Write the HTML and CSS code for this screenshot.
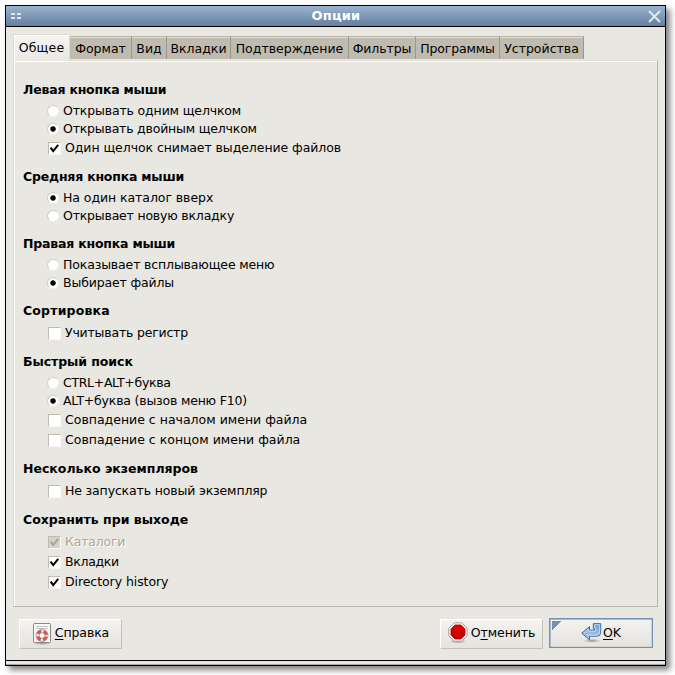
FILE: index.html
```html
<!DOCTYPE html>
<html lang="ru">
<head>
<meta charset="utf-8">
<title>Опции</title>
<link rel="stylesheet" href="styles.css">
</head>
<body>
<svg class="defs" width="0" height="0">
  <symbol id="tick" viewBox="0 0 11 11"><path d="M1.6 4.6 4.2 8.2 9.2 1.8" fill="none" stroke="currentColor" stroke-width="2"/></symbol>
  <linearGradient id="blue" x2="0" y2="1"><stop offset="0" stop-color="#6f9bcc"/><stop offset="1" stop-color="#b8d2ee"/></linearGradient>
  <linearGradient id="red" x2="0" y2="1"><stop offset="0" stop-color="#e60000"/><stop offset="1" stop-color="#c00000"/></linearGradient>
  <radialGradient id="shade"><stop offset="0" stop-color="#000" stop-opacity=".35"/><stop offset="1" stop-color="#000" stop-opacity="0"/></radialGradient>
</svg>
<div class="window">
  <header class="titlebar">
    <svg class="menu-mark" width="10" height="6"><path d="M0 1h4M6 1h4M0 5h4M6 5h4" stroke="#e2e8ef" stroke-width="2"/></svg>
    <h1>Опции</h1>
    <svg class="close" width="13" height="13"><path d="M1 1 12 12M12 1 1 12" stroke="#e2e8ef" stroke-width="2"/></svg>
  </header>
  <main>
    <nav class="tabs">
      <span class="tab active">Общее</span><span class="tab t-format">Формат</span><span class="tab t-view">Вид</span><span class="tab t-tabs">Вкладки</span><span class="tab t-confirm">Подтверждение</span><span class="tab t-filters">Фильтры</span><span class="tab t-programs">Программы</span><span class="tab t-devices">Устройства</span>
    </nav>
    <div class="page">
      <section><h2 class="tight-2">Левая кнопка мыши</h2>
        <label class="radio tight-1"><i></i>Открывать одним щелчком</label>
        <label class="radio on tight-2"><i></i>Открывать двойным щелчком</label>
        <label class="check tight-0"><i><svg><use href="#tick"/></svg></i>Один щелчок снимает выделение файлов</label>
      </section>
      <section><h2 class="tight-2">Средняя кнопка мыши</h2>
        <label class="radio on tight-0"><i></i>На один каталог вверх</label>
        <label class="radio tight-2"><i></i>Открывает новую вкладку</label>
      </section>
      <section><h2 class="tight-2">Правая кнопка мыши</h2>
        <label class="radio tight-1"><i></i>Показывает всплывающее меню</label>
        <label class="radio on tight-1"><i></i>Выбирает файлы</label>
      </section>
      <section><h2 class="loose">Сортировка</h2>
        <label class="check tight-2"><i></i>Учитывать регистр</label>
      </section>
      <section><h2 class="tight-0">Быстрый поиск</h2>
        <label class="radio tight-3"><i></i>CTRL+ALT+буква</label>
        <label class="radio on tight-2"><i></i>ALT+буква (вызов меню F10)</label>
        <label class="check"><i></i>Совпадение с началом имени файла</label>
        <label class="check"><i></i>Совпадение с концом имени файла</label>
      </section>
      <section><h2>Несколько экземпляров</h2>
        <label class="check tight-1"><i></i>Не запускать новый экземпляр</label>
      </section>
      <section><h2>Сохранить при выходе</h2>
        <label class="check disabled tight-2"><i><svg><use href="#tick"/></svg></i>Каталоги</label>
        <label class="check tight-3"><i><svg><use href="#tick"/></svg></i>Вкладки</label>
        <label class="check tight-0"><i><svg><use href="#tick"/></svg></i>Directory history</label>
      </section>
    </div>
    <footer>
      <button class="help">
        <svg width="20" height="23" viewBox="0 0 20 23">
          <ellipse cx="10" cy="21.5" rx="10" ry="1.5" fill="url(#shade)"/>
          <rect x="1.5" y="1.5" width="17" height="19" rx="1" fill="#f7f7f5" stroke="#888a85"/>
          <path d="M4 4.5h12M4 6.5h12" stroke="#c4c6c1"/>
          <circle cx="10" cy="13.5" r="4.4" fill="none" stroke="#f5eeee" stroke-width="3.4"/>
          <circle cx="10" cy="13.5" r="4.4" fill="none" stroke="#d65050" stroke-width="3" stroke-dasharray="4.4 2.51" stroke-dashoffset="-1.2"/>
          <circle cx="10" cy="13.5" r="6" fill="none" stroke="#a88583" stroke-width=".8"/>
          <circle cx="10" cy="13.5" r="2.8" fill="#fff" stroke="#a88583" stroke-width=".8"/>
        </svg>
        <span><u>С</u>правка</span>
      </button>
      <button class="cancel">
        <svg width="20" height="22" viewBox="0 0 20 22">
          <ellipse cx="10" cy="19.5" rx="9" ry="2.2" fill="url(#shade)"/>
          <path d="M6.2.8h7.6l5.4 5.4v7.6l-5.4 5.4H6.2L.8 13.8V6.2z" fill="#f4f4f2" stroke="#a3a59f"/>
          <path d="M7 3h6l4 4v6l-4 4H7l-4-4V7z" fill="url(#red)" stroke="#b30000" stroke-width=".8"/>
        </svg>
        <span>О<u>т</u>менить</span>
      </button>
      <button class="ok">
        <svg width="21" height="20" viewBox="0 0 21 20">
          <ellipse cx="11" cy="17.8" rx="9" ry="2" fill="url(#shade)"/>
          <path d="M.8 10.2 8.5 3.6v3.6h5V5.7h-1.2V.7h7.4v8.7q0 3.8-4 3.8H8.5v3.6z" fill="url(#blue)" stroke="#3465a4" stroke-linejoin="round"/>
          <path d="M2.7 10.2 7.6 6v2.2h6.9V4.7h-1.2v-3h5.4v7.4q0 3.1-3.2 3.1H7.6" fill="none" stroke="#d5e4f5" stroke-width=".8"/>
        </svg>
        <span><u>О</u>K</span>
      </button>
    </footer>
  </main>
  <div class="grip"></div>
</div>
</body>
</html>
```
FILE: styles.css
```css
* { box-sizing: border-box; }
body { margin: 0; padding: 5px; height: 675px; overflow: hidden; background: #fff; font: 12.5px/18px "DejaVu Sans", sans-serif; color: #000; }
.defs { position: absolute; }
.window { width: 661px; height: 661px; border: 1px solid #000; background: #e8e7e2; box-shadow: 4px 4px 6px rgba(0,0,0,.5); display: flex; flex-direction: column; }
.titlebar { height: 21px; flex: none; display: flex; align-items: center; justify-content: space-between; padding: 0 4px 0 5px; border-bottom: 1px solid #000; background: linear-gradient(#9db3d0, #637f9f); }
.titlebar h1 { margin: 0 0 0 3px; font-size: 13px; line-height: 18px; letter-spacing: .2px; color: #fff; }
main { flex: 1; display: flex; flex-direction: column; padding: 7px 7px 0; }
.tabs { display: flex; align-items: flex-end; height: 26px; white-space: nowrap; }
.tab { height: 23px; margin-bottom: 1px; border-top: 1px solid #bab5a9; border-right: 1px solid #9c9788; background: #c0bbb0; box-shadow: inset 0 1px #dedbd2; line-height: 24px; display: flex; justify-content: center; }
.tab.active { width: 57px; height: 27px; margin: 0 0 -1px; position: relative; background: linear-gradient(#f5f4f2, #e8e7e2); border: 1px solid #dddbd4; border-bottom: 0; box-shadow: inset 1px 1px #fff; line-height: 25px; letter-spacing: .15px; }
.t-format { width: 62px; }
.t-view { width: 35px; }
.t-tabs { width: 64px; }
.t-confirm { width: 118px; }
.t-filters { width: 67px; letter-spacing: -.1px; }
.t-programs { width: 84px; letter-spacing: -.15px; }
.t-devices { width: 84px; }
.page { height: 547px; width: 645px; border: 1px solid #bab5a9; border-left-color: #dddbd4; border-top-color: #dddbd4; box-shadow: inset 1px 1px #fff; padding: 20px 9px 0; }
section { margin-bottom: 10px; }
h2 { margin: 0 0 3px; font-size: 12.5px; line-height: 18px; }
label { display: flex; align-items: center; padding-left: 24px; white-space: nowrap; }
.tight-0 { letter-spacing: -.07px; }
.tight-1 { letter-spacing: -.15px; }
.tight-2 { letter-spacing: -.2px; }
.tight-3 { letter-spacing: -.32px; }
.loose { letter-spacing: .18px; }
.radio { height: 18px; }
.check { height: 20px; }
.radio i { width: 12px; height: 12px; margin-right: 4px; border-radius: 50%; background: #fff; border: 1px solid; border-color: #d0cdc3 #f3f2ee #f3f2ee #d0cdc3; }
.radio.on i { background: radial-gradient(circle, #000 2.3px, #fff 3.1px); }
.check i { width: 13px; height: 13px; margin: 0 4px 0 1px; background: #fff; border: 1px solid; border-color: #c0bcb0 #f8f7f5 #f8f7f5 #c0bcb0; display: flex; }
.check svg { width: 11px; height: 11px; }
.disabled { color: #aaa698; text-shadow: 1px 1px #fff; }
.disabled i { background: #d6d2c8; }
footer { display: flex; padding: 11px 5px 0 6px; align-items: flex-start; }
button { width: 103px; height: 30px; margin: 1px 0 0; padding: 0 0 2px; display: flex; align-items: center; justify-content: center; gap: 3px; font: inherit; letter-spacing: -.1px; color: inherit; border: 1px solid; border-color: #fff #c5c1b8 #c5c1b8 #fff; background: linear-gradient(#f4f3f1, #e5e3de); }
button u { text-underline-offset: 2px; }
.cancel { margin-left: auto; margin-right: 6px; }
.ok { width: 104px; height: 30px; margin-top: 0; padding-bottom: 1px; gap: 1px; border: 1px solid #7590b2; box-shadow: inset 1px 1px #aab9cb, inset -1px -1px #d2d0c9; background: linear-gradient(135deg, #7590b2 6.5px, transparent 7px) 2px 2px no-repeat, linear-gradient(#f4f3f1, #e5e3de); }
.grip { height: 5px; flex: none; border-top: 1px solid #000; background: #ebe3e1; border-bottom: 1px solid #aaa3a0; }
```
